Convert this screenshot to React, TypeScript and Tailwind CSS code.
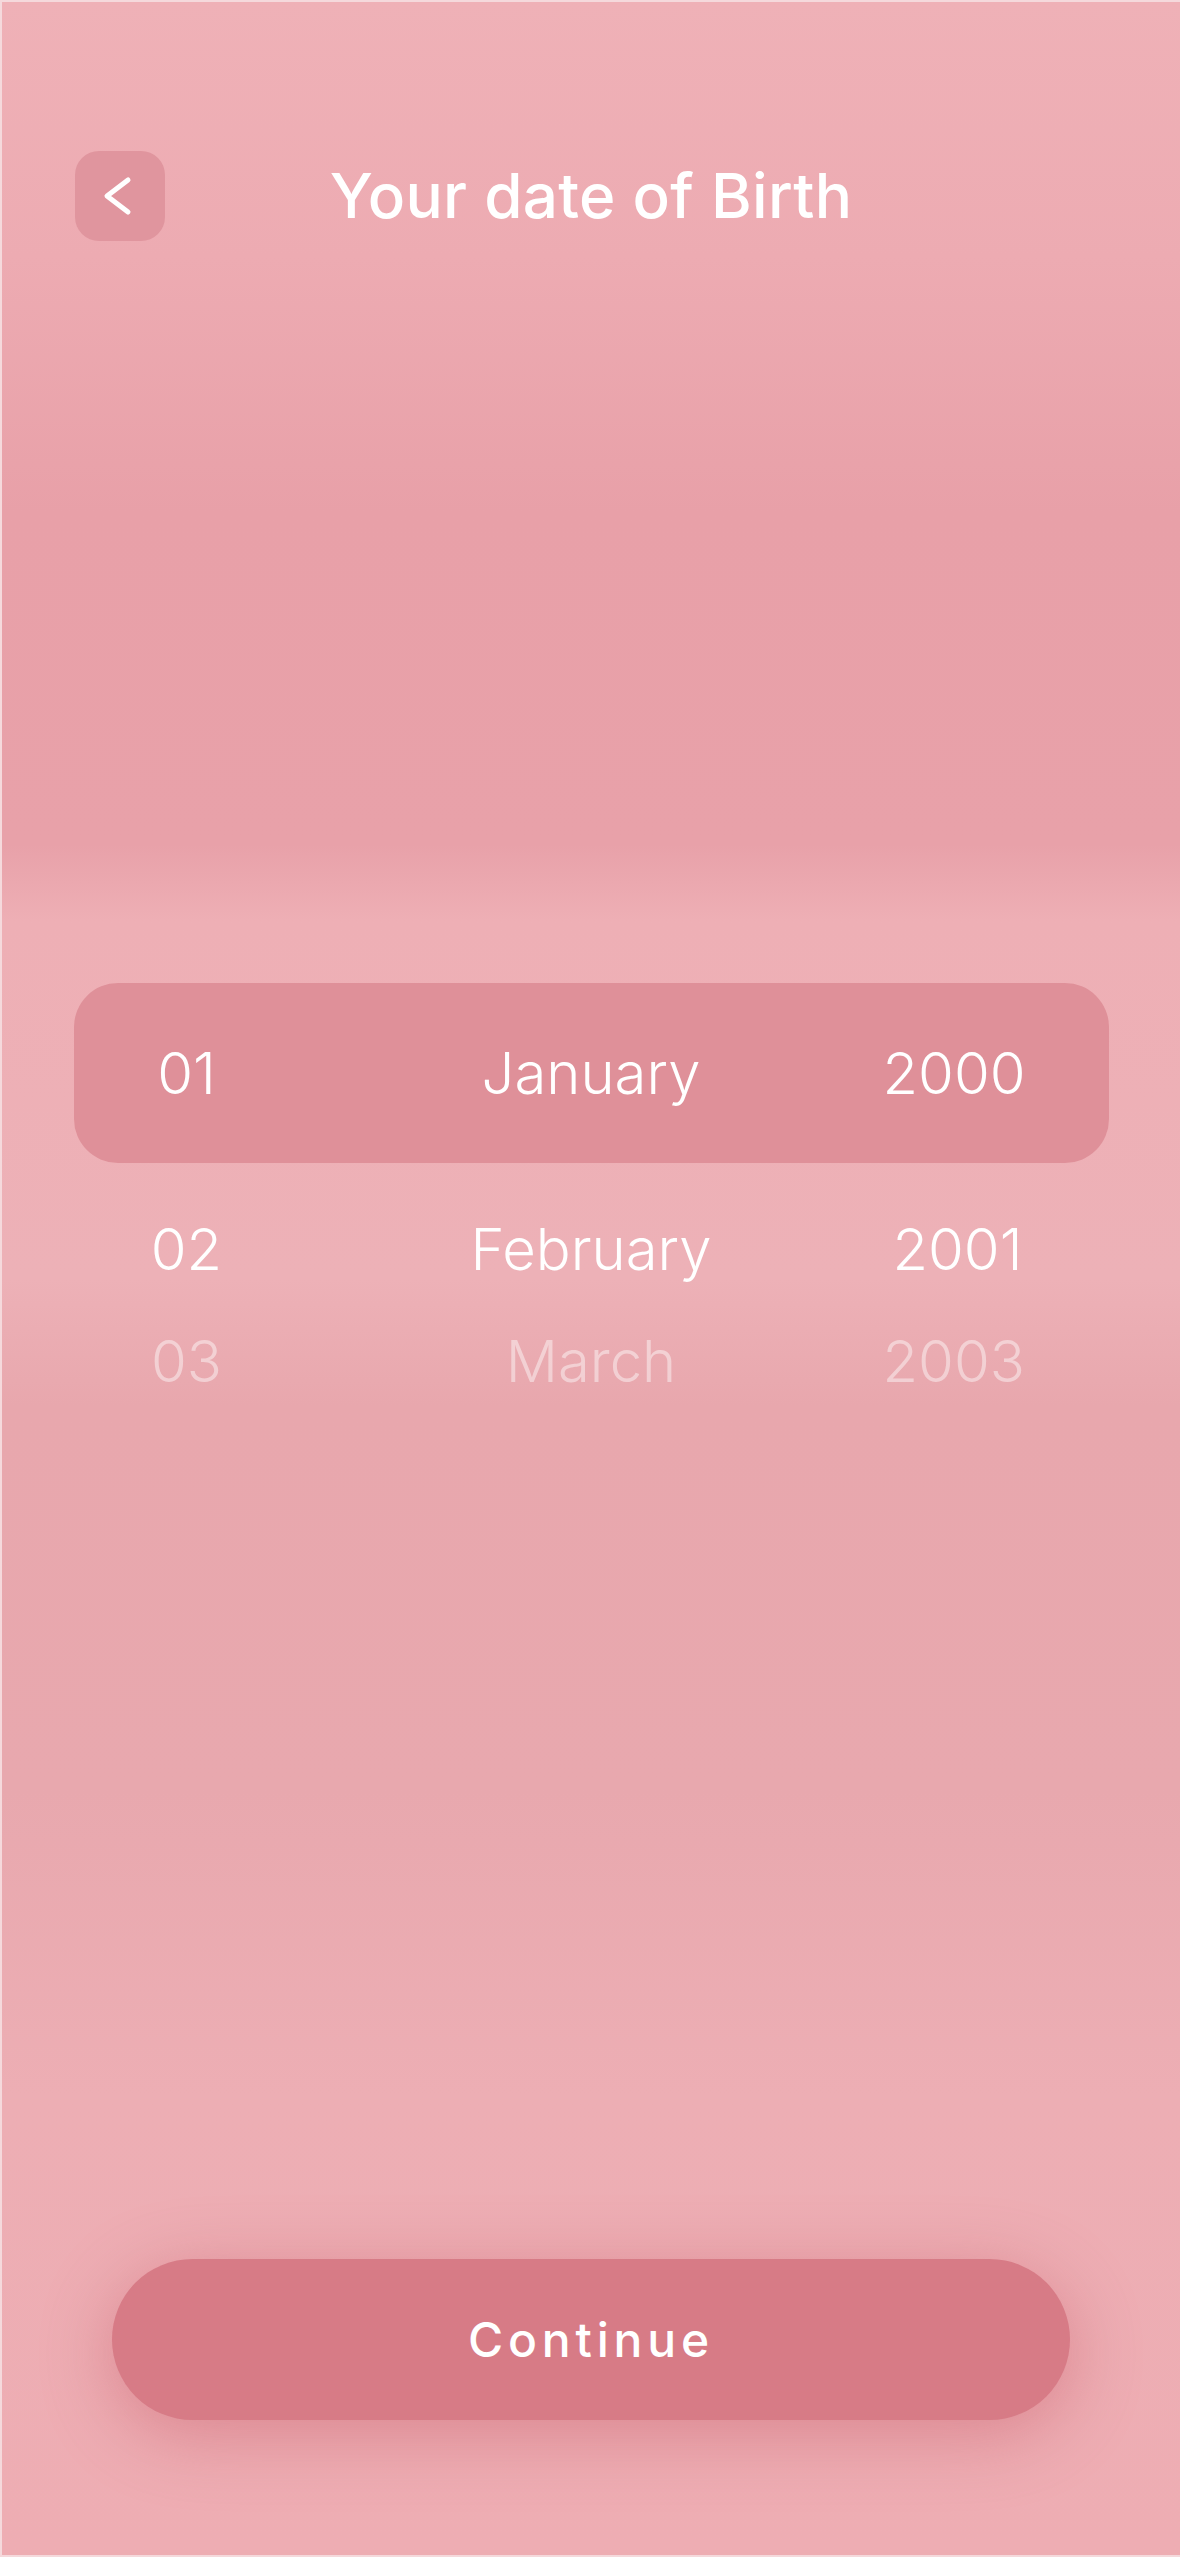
import React from 'react';

const rows = [
  { day: '02', month: 'February', year: '2001', faded: false },
  { day: '03', month: 'March', year: '2003', faded: true },
];

const BackButton = () => (
  <button className="w-[90px] h-[90px] rounded-[24px] bg-[#e0959e] flex items-center justify-center">
    <svg width="40" height="40" viewBox="0 0 40 40" fill="none">
      <path d="M28 4 L7 20 L28 36" stroke="white" strokeWidth="5" strokeLinecap="round" strokeLinejoin="round" />
    </svg>
  </button>
);

export default function App() {
  return (
    <div className="w-full h-[2557px] overflow-hidden flex flex-col border-l-2 border-t-2 border-b-2 border-[#f5d9dc] bg-[linear-gradient(180deg,#efb1b7_0%,#edabb2_10%,#e8a0a8_20%,#e8a1a9_33%,#eeafb5_36%,#edb1b7_50%,#e8a7ad_55%,#e8a8ae_70%,#edaeb4_82%,#eeadb3_100%)] font-['Inter','Noto_Sans',sans-serif] text-white">
      {/* header */}
      <div className="grid grid-cols-[90px_1fr_90px] items-center px-[73px] pt-[149px]">
        <BackButton />
        <h1 className="text-center text-[62px] font-medium leading-none tracking-[0.3px]">Your date of Birth</h1>
        <div />
      </div>

      {/* picker */}
      <div className="w-[1035px] mx-auto mt-[742px]">
        <div className="grid grid-cols-[226px_1fr_226px] items-center h-[180px] rounded-[44px] bg-[#df9099] text-[58px] font-light leading-none">
          <span className="text-center">01</span>
          <span className="text-center">January</span>
          <span className="text-right pr-[86px]">2000</span>
        </div>
        <div className="mt-[30px]">
          {rows.map(r => (
            <div
              key={r.day}
              className={`grid grid-cols-[226px_1fr_226px] items-center h-[112px] text-[58px] font-light leading-none ${r.faded ? 'opacity-45' : ''}`}
            >
              <span className="text-center">{r.day}</span>
              <span className="text-center">{r.month}</span>
              <span className="text-right pr-[86px]">{r.year}</span>
            </div>
          ))}
        </div>
      </div>

      {/* continue */}
      <div className="mt-auto pb-[135px] flex justify-center">
        <button className="w-[958px] h-[161px] rounded-full bg-[#d77b86] shadow-[0_14px_70px_rgba(196,86,100,0.45)] text-[48px] font-medium tracking-[0.1em] text-white">
          Continue
        </button>
      </div>
    </div>
  );
}
